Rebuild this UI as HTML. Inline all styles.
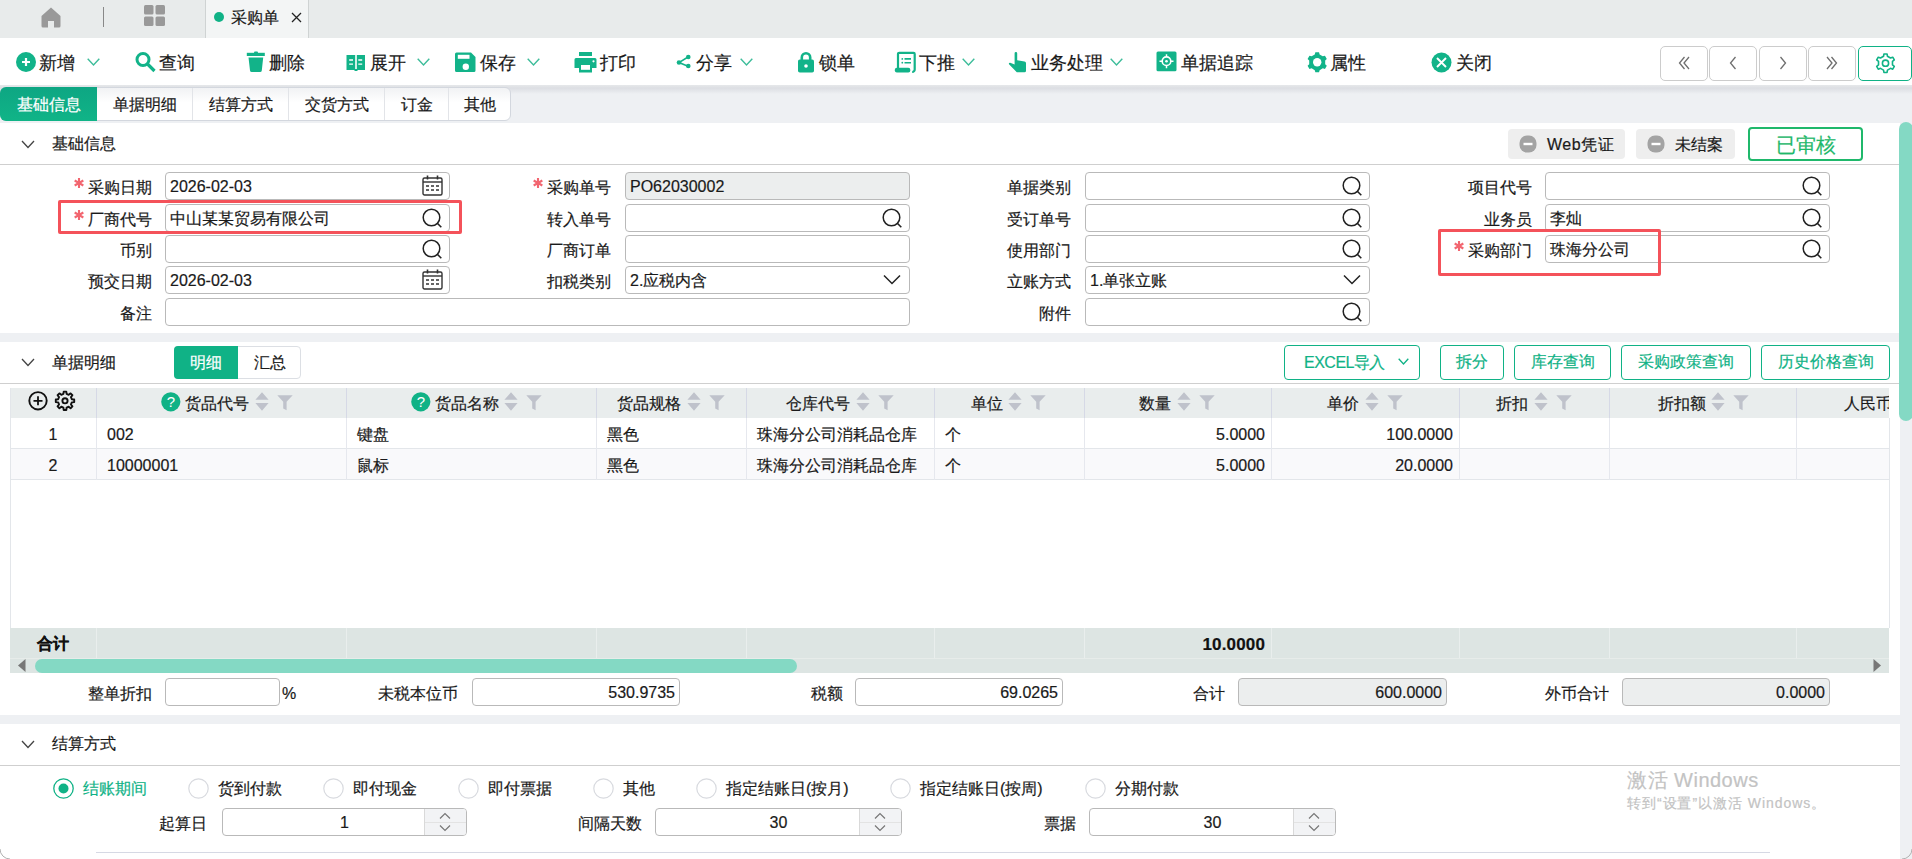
<!DOCTYPE html>
<html><head><meta charset="utf-8"><style>
html,body{margin:0;padding:0}
body{width:1912px;height:859px;overflow:hidden;position:relative;background:#eef0f3;font-family:"Liberation Sans",sans-serif}
.a{position:absolute}
.t{white-space:nowrap;-webkit-text-stroke:0.2px currentColor}
</style></head><body>
<div class="a" style="left:0px;top:0px;width:1912px;height:38px;background:#e8ebeb"></div>
<svg class="a" style="left:41px;top:7px" width="20" height="21" viewBox="0 0 20 21"><path d="M10 0.5 L19.5 9 V19 a1.5 1.5 0 0 1 -1.5 1.5 H13 V14 H7 V20.5 H2 a1.5 1.5 0 0 1 -1.5 -1.5 V9 Z" fill="#999"/></svg>
<div class="a" style="left:103px;top:7px;width:1px;height:20px;background:#888"></div>
<svg class="a" style="left:144px;top:5px" width="22" height="21" viewBox="0 0 22 21"><rect x="0" y="0" width="9.5" height="9.5" rx="1.5" fill="#999"/><rect x="11.5" y="0" width="9.5" height="9.5" rx="1.5" fill="#999"/><rect x="0" y="11.5" width="9.5" height="9.5" rx="1.5" fill="#999"/><rect x="11.5" y="11.5" width="9.5" height="9.5" rx="1.5" fill="#999"/></svg>
<div class="a" style="left:205px;top:0px;width:104px;height:38px;background:#f3f5f5;border-left:1px solid #cfd3d3;border-right:1px solid #cfd3d3;box-sizing:border-box"></div>
<svg class="a" style="left:214px;top:12px" width="10" height="10" viewBox="0 0 10 10"><circle cx="5" cy="5" r="5" fill="#10b286"/></svg>
<div class="a t" style="left:231px;top:8px;font-size:16px;line-height:20px;color:#1a1a1a;">采购单</div>
<svg class="a" style="left:291px;top:12px" width="11" height="11" viewBox="0 0 11 11"><path d="M1 1 L10 10 M10 1 L1 10" stroke="#222" stroke-width="1.3"/></svg>
<div class="a" style="left:0px;top:38px;width:1912px;height:47px;background:#fff"></div>
<div class="a" style="left:0px;top:85px;width:1912px;height:9px;background:linear-gradient(#e6e8ea,#dcdee3 35%,#eef0f3)"></div>
<svg class="a" style="left:16px;top:52px" width="20" height="20" viewBox="0 0 20 20"><circle cx="10" cy="10" r="10" fill="#12b389"/><path d="M6 10 H14 M10 6 V14" stroke="#fff" stroke-width="2.2"/></svg>
<div class="a t" style="left:39px;top:52px;font-size:18px;line-height:22px;color:#1a1a1a;">新增</div>
<svg class="a" style="left:87px;top:58px" width="13" height="9" viewBox="0 0 13 9"><path d="M0.7 0.8 L6.5 7 L12.3 0.8" fill="none" stroke="#3dbd9a" stroke-width="1.4"/></svg>
<svg class="a" style="left:135px;top:52px" width="22" height="21" viewBox="0 0 22 21"><circle cx="8" cy="7.5" r="6" fill="none" stroke="#12b389" stroke-width="3"/><path d="M12.5 12 L19.5 19" stroke="#12b389" stroke-width="3.2"/></svg>
<div class="a t" style="left:159px;top:52px;font-size:18px;line-height:22px;color:#1a1a1a;">查询</div>
<svg class="a" style="left:246px;top:51px" width="20" height="22" viewBox="0 0 20 22"><rect x="0.8" y="1.8" width="18" height="3.2" fill="#12b389"/><rect x="8" y="0.5" width="4" height="2" rx="1" fill="#12b389"/><path d="M2.5 6.5 H17.2 L15.8 19.5 a1.8 1.8 0 0 1 -1.8 1.6 H5.8 a1.8 1.8 0 0 1 -1.8 -1.6 Z" fill="#12b389"/></svg>
<div class="a t" style="left:269px;top:52px;font-size:18px;line-height:22px;color:#1a1a1a;">删除</div>
<svg class="a" style="left:346px;top:54px" width="20" height="18" viewBox="0 0 20 18"><path d="M0.5 1 H9.2 V16 H0.5 Z M10.8 1 H19 V16 H10.8 Z" fill="#12b389"/><path d="M8.5 15 H11.5 V17 H8.5 Z" fill="#12b389"/><path d="M3.2 6 H7 M3.2 10.2 H7 M12.3 6 H16.2 M12.3 10.2 H16.2" stroke="#fff" stroke-width="1.3"/></svg>
<div class="a t" style="left:370px;top:52px;font-size:18px;line-height:22px;color:#1a1a1a;">展开</div>
<svg class="a" style="left:417px;top:58px" width="13" height="9" viewBox="0 0 13 9"><path d="M0.7 0.8 L6.5 7 L12.3 0.8" fill="none" stroke="#3dbd9a" stroke-width="1.4"/></svg>
<svg class="a" style="left:455px;top:52px" width="22" height="21" viewBox="0 0 22 21"><path d="M1.5 0.5 H16 L20.5 5 V18.5 a1.5 1.5 0 0 1 -1.5 1.5 H1.5 a1.5 1.5 0 0 1 -1.5 -1.5 V2 a1.5 1.5 0 0 1 1.5 -1.5 Z" fill="#12b389"/><rect x="2.8" y="2.8" width="11.7" height="4" fill="#fff"/><circle cx="10.8" cy="14.8" r="3.2" fill="#fff"/></svg>
<div class="a t" style="left:480px;top:52px;font-size:18px;line-height:22px;color:#1a1a1a;">保存</div>
<svg class="a" style="left:527px;top:58px" width="13" height="9" viewBox="0 0 13 9"><path d="M0.7 0.8 L6.5 7 L12.3 0.8" fill="none" stroke="#3dbd9a" stroke-width="1.4"/></svg>
<svg class="a" style="left:574px;top:52px" width="24" height="21" viewBox="0 0 24 21"><rect x="5" y="0" width="13" height="4" fill="#12b389"/><path d="M2 6 H21 a1.5 1.5 0 0 1 1.5 1.5 V16 H0.5 V7.5 a1.5 1.5 0 0 1 1.5 -1.5 Z" fill="#12b389"/><rect x="5" y="12.5" width="13" height="8" fill="#12b389"/><rect x="7" y="13" width="9" height="4.8" fill="#fff"/><circle cx="19.5" cy="9.3" r="1.1" fill="#fff"/></svg>
<div class="a t" style="left:600px;top:52px;font-size:18px;line-height:22px;color:#1a1a1a;">打印</div>
<svg class="a" style="left:676px;top:54px" width="16" height="15" viewBox="0 0 16 15"><path d="M12 3 L3 8.5 L12 12.2" fill="none" stroke="#12b389" stroke-width="1.5"/><circle cx="12.3" cy="3" r="2.3" fill="#12b389"/><circle cx="3" cy="8.5" r="2.3" fill="#12b389"/><circle cx="12.3" cy="12" r="2.3" fill="#12b389"/></svg>
<div class="a t" style="left:696px;top:52px;font-size:18px;line-height:22px;color:#1a1a1a;">分享</div>
<svg class="a" style="left:740px;top:58px" width="13" height="9" viewBox="0 0 13 9"><path d="M0.7 0.8 L6.5 7 L12.3 0.8" fill="none" stroke="#3dbd9a" stroke-width="1.4"/></svg>
<svg class="a" style="left:798px;top:52px" width="16" height="21" viewBox="0 0 16 21"><path d="M3.8 8 V5.5 a4.2 4.2 0 0 1 8.4 0 V8" fill="none" stroke="#12b389" stroke-width="2.6"/><rect x="0" y="7.5" width="16" height="13" rx="1.8" fill="#12b389"/><circle cx="8" cy="14" r="1.8" fill="#fff"/></svg>
<div class="a t" style="left:819px;top:52px;font-size:18px;line-height:22px;color:#1a1a1a;">锁单</div>
<svg class="a" style="left:894px;top:51px" width="22" height="22" viewBox="0 0 22 22"><path d="M4 19 V3 a1.2 1.2 0 0 1 1.2 -1.2 H19.5 a1.2 1.2 0 0 1 1.2 1.2 V18.5 a2.5 2.5 0 0 1 -2.5 2.5" fill="none" stroke="#12b389" stroke-width="2.2"/><rect x="0.8" y="16.8" width="15.5" height="4.7" rx="2" fill="#12b389"/><circle cx="8.3" cy="7.9" r="0.9" fill="#12b389"/><circle cx="8.3" cy="11.7" r="0.9" fill="#12b389"/><path d="M10.5 7.9 H17 M10.5 11.7 H17" stroke="#12b389" stroke-width="1.6"/></svg>
<div class="a t" style="left:919px;top:52px;font-size:18px;line-height:22px;color:#1a1a1a;">下推</div>
<svg class="a" style="left:962px;top:58px" width="13" height="9" viewBox="0 0 13 9"><path d="M0.7 0.8 L6.5 7 L12.3 0.8" fill="none" stroke="#3dbd9a" stroke-width="1.4"/></svg>
<svg class="a" style="left:1008px;top:52px" width="19" height="21" viewBox="0 0 19 21"><path d="M6.6 1.3 a1.3 1.3 0 0 1 2.6 0 V8.2 L16.5 9.6 a1.8 1.8 0 0 1 1.5 1.8 V18.8 a1.5 1.5 0 0 1 -1.5 1.5 H8.8 L1 12.3 a1.2 1.2 0 0 1 1.2 -1.6 L6.6 12.6 Z" fill="#12b389"/></svg>
<div class="a t" style="left:1031px;top:52px;font-size:18px;line-height:22px;color:#1a1a1a;">业务处理</div>
<svg class="a" style="left:1110px;top:58px" width="13" height="9" viewBox="0 0 13 9"><path d="M0.7 0.8 L6.5 7 L12.3 0.8" fill="none" stroke="#3dbd9a" stroke-width="1.4"/></svg>
<svg class="a" style="left:1156px;top:51px" width="21" height="21" viewBox="0 0 21 21"><rect x="0.5" y="0.5" width="20" height="19.8" rx="1.5" fill="#12b389"/><circle cx="10.5" cy="10.2" r="4.3" fill="none" stroke="#fff" stroke-width="1.6"/><circle cx="10.5" cy="10.2" r="1.3" fill="#fff"/><path d="M10.5 3.2 V6 M10.5 14.4 V17.2 M3.5 10.2 H6.3 M14.7 10.2 H17.5" stroke="#fff" stroke-width="1.5"/></svg>
<div class="a t" style="left:1181px;top:52px;font-size:18px;line-height:22px;color:#1a1a1a;">单据追踪</div>
<svg class="a" style="left:1307px;top:52px" width="21" height="21" viewBox="0 0 21 21"><path d="M7.78 2.46 L8.35 0.27 L12.05 0.27 L12.62 2.46 L15.78 4.29 L17.96 3.69 L19.81 6.88 L18.19 8.47 L18.19 12.13 L19.81 13.72 L17.96 16.91 L15.78 16.31 L12.62 18.14 L12.05 20.33 L8.35 20.33 L7.78 18.14 L4.62 16.31 L2.44 16.91 L0.59 13.72 L2.21 12.13 L2.21 8.47 L0.59 6.88 L2.44 3.69 L4.62 4.29 Z" fill="#12b389"/><circle cx="10.2" cy="10.3" r="4.2" fill="#fff"/></svg>
<div class="a t" style="left:1330px;top:52px;font-size:18px;line-height:22px;color:#1a1a1a;">属性</div>
<svg class="a" style="left:1431px;top:52px" width="21" height="21" viewBox="0 0 21 21"><circle cx="10.5" cy="10.5" r="10" fill="#12b389"/><path d="M6 6 L15 15 M15 6 L6 15" stroke="#fff" stroke-width="1.9"/></svg>
<div class="a t" style="left:1456px;top:52px;font-size:18px;line-height:22px;color:#1a1a1a;">关闭</div>
<div class="a" style="left:1660px;top:46px;width:48px;height:35px;border:1px solid #cccccc;border-radius:5px;box-sizing:border-box;background:#fff"></div>
<div class="a" style="left:1709px;top:46px;width:48px;height:35px;border:1px solid #cccccc;border-radius:5px;box-sizing:border-box;background:#fff"></div>
<div class="a" style="left:1759px;top:46px;width:48px;height:35px;border:1px solid #cccccc;border-radius:5px;box-sizing:border-box;background:#fff"></div>
<div class="a" style="left:1808px;top:46px;width:48px;height:35px;border:1px solid #cccccc;border-radius:5px;box-sizing:border-box;background:#fff"></div>
<svg class="a" style="left:1678px;top:56px" width="12" height="14" viewBox="0 0 12 14"><path d="M6.5 1 L1.5 7 L6.5 13 M11 1 L6 7 L11 13" fill="none" stroke="#6e6e6e" stroke-width="1.3"/></svg>
<svg class="a" style="left:1728px;top:56px" width="10" height="14" viewBox="0 0 10 14"><path d="M7.5 1 L2.5 7 L7.5 13" fill="none" stroke="#6e6e6e" stroke-width="1.3"/></svg>
<svg class="a" style="left:1778px;top:56px" width="10" height="14" viewBox="0 0 10 14"><path d="M2.5 1 L7.5 7 L2.5 13" fill="none" stroke="#6e6e6e" stroke-width="1.3"/></svg>
<svg class="a" style="left:1826px;top:56px" width="12" height="14" viewBox="0 0 12 14"><path d="M1 1 L6 7 L1 13 M5.5 1 L10.5 7 L5.5 13" fill="none" stroke="#6e6e6e" stroke-width="1.3"/></svg>
<div class="a" style="left:1858px;top:46px;width:54px;height:35px;border:1.5px solid #10b286;border-radius:5px;box-sizing:border-box;background:#fff"></div>
<svg class="a" style="left:1875px;top:53px" width="21" height="21" viewBox="0 0 21 21"><path d="M8.54 3.27 L8.93 0.93 L12.07 0.93 L12.46 3.27 L15.52 5.04 L17.74 4.20 L19.31 6.93 L17.48 8.44 L17.48 11.96 L19.31 13.47 L17.74 16.20 L15.52 15.36 L12.46 17.13 L12.07 19.47 L8.93 19.47 L8.54 17.13 L5.48 15.36 L3.26 16.20 L1.69 13.47 L3.52 11.96 L3.52 8.44 L1.69 6.93 L3.26 4.20 L5.48 5.04 Z" fill="none" stroke="#10b286" stroke-width="1.6" stroke-linejoin="round"/><circle cx="10.5" cy="10.2" r="3.1" fill="none" stroke="#10b286" stroke-width="1.6"/></svg>
<div class="a" style="left:0;top:87px;width:511px;height:34px;border:1px solid #d3d7de;border-radius:6px;box-sizing:border-box;background:linear-gradient(#f1f2f4,#fff 45%);overflow:hidden"></div>
<div class="a" style="left:0px;top:87px;width:97px;height:34px;background:linear-gradient(#0ea683,#10b487);border-radius:6px 0 0 6px"></div>
<div class="a" style="left:192px;top:88px;width:1px;height:32px;background:#e2e4e8"></div>
<div class="a" style="left:288px;top:88px;width:1px;height:32px;background:#e2e4e8"></div>
<div class="a" style="left:384px;top:88px;width:1px;height:32px;background:#e2e4e8"></div>
<div class="a" style="left:448px;top:88px;width:1px;height:32px;background:#e2e4e8"></div>
<div class="a t" style="left:-1.5px;top:95px;width:100px;text-align:center;font-size:16px;line-height:20px;color:#fff;">基础信息</div>
<div class="a t" style="left:94.5px;top:95px;width:100px;text-align:center;font-size:16px;line-height:20px;color:#1a1a1a;">单据明细</div>
<div class="a t" style="left:190.5px;top:95px;width:100px;text-align:center;font-size:16px;line-height:20px;color:#1a1a1a;">结算方式</div>
<div class="a t" style="left:286.5px;top:95px;width:100px;text-align:center;font-size:16px;line-height:20px;color:#1a1a1a;">交货方式</div>
<div class="a t" style="left:366.5px;top:95px;width:100px;text-align:center;font-size:16px;line-height:20px;color:#1a1a1a;">订金</div>
<div class="a t" style="left:430.0px;top:95px;width:100px;text-align:center;font-size:16px;line-height:20px;color:#1a1a1a;">其他</div>
<div class="a" style="left:0px;top:123px;width:1900px;height:210px;background:#fff"></div>
<svg class="a" style="left:21px;top:140px" width="14" height="9" viewBox="0 0 14 9"><path d="M1 1 L7 7.5 L13 1" fill="none" stroke="#444" stroke-width="1.3"/></svg>
<div class="a t" style="left:52px;top:134px;font-size:16px;line-height:20px;color:#1a1a1a;">基础信息</div>
<div class="a" style="left:0px;top:164px;width:1900px;height:1px;background:#cfcfcf"></div>
<div class="a" style="left:1508px;top:129px;width:117px;height:30px;background:#eeeeee;border-radius:4px"></div>
<svg class="a" style="left:1519px;top:135px" width="18" height="18" viewBox="0 0 18 18"><rect x="0.5" y="0.5" width="17" height="17" rx="7.5" fill="#a3a3a3"/><rect x="4.5" y="7.8" width="9" height="2.4" fill="#fff"/></svg>
<div class="a t" style="left:1547px;top:135px;font-size:16px;line-height:20px;color:#1a1a1a;letter-spacing:0.5px">Web凭证</div>
<div class="a" style="left:1636px;top:129px;width:99px;height:30px;background:#eeeeee;border-radius:4px"></div>
<svg class="a" style="left:1647px;top:135px" width="18" height="18" viewBox="0 0 18 18"><rect x="0.5" y="0.5" width="17" height="17" rx="7.5" fill="#a3a3a3"/><rect x="4.5" y="7.8" width="9" height="2.4" fill="#fff"/></svg>
<div class="a t" style="left:1675px;top:135px;font-size:16px;line-height:20px;color:#1a1a1a;">未结案</div>
<div class="a" style="left:1748px;top:127px;width:115px;height:34px;border:2px solid #1fb86b;border-radius:4px;box-sizing:border-box"></div>
<div class="a t" style="left:1750.5px;top:133px;width:110px;text-align:center;font-size:20px;line-height:24px;color:#1fb86b;">已审核</div>
<div class="a t" style="left:-148px;top:178px;width:300px;text-align:right;font-size:16px;line-height:20px;color:#1a1a1a;">采购日期</div>
<svg class="a" style="left:73px;top:177px" width="12" height="12" viewBox="0 0 12 12"><path d="M6 1.0 V11.0 M1.67 3.5 L10.33 8.5 M1.67 8.5 L10.33 3.5" stroke="#f26670" stroke-width="2.1"/></svg>
<div class="a" style="left:165px;top:172px;width:285px;height:28px;border:1px solid #b9b9b9;border-radius:4px;box-sizing:border-box;background:#fff"></div>
<div class="a t" style="left:170px;top:177px;font-size:16px;line-height:20px;color:#1a1a1a;">2026-02-03</div>
<svg class="a" style="left:422px;top:175px" width="21" height="21" viewBox="0 0 21 21"><rect x="1" y="3" width="19" height="17" rx="1.5" fill="none" stroke="#333" stroke-width="1.4"/><path d="M1 7 H20" stroke="#333" stroke-width="1.4"/><path d="M5.5 0.5 V4.5 M15.5 0.5 V4.5" stroke="#333" stroke-width="1.6"/><path d="M4 11 H7 M9 11 H12 M14 11 H17 M4 15 H7 M9 15 H12 M14 15 H17" stroke="#333" stroke-width="1.3"/></svg>
<div class="a t" style="left:-148px;top:209.5px;width:300px;text-align:right;font-size:16px;line-height:20px;color:#1a1a1a;">厂商代号</div>
<svg class="a" style="left:73px;top:208.5px" width="12" height="12" viewBox="0 0 12 12"><path d="M6 1.0 V11.0 M1.67 3.5 L10.33 8.5 M1.67 8.5 L10.33 3.5" stroke="#f26670" stroke-width="2.1"/></svg>
<div class="a" style="left:165px;top:203.5px;width:285px;height:28px;border:1px solid #b9b9b9;border-radius:4px;box-sizing:border-box;background:#fff"></div>
<div class="a t" style="left:170px;top:208.5px;font-size:16px;line-height:20px;color:#1a1a1a;">中山某某贸易有限公司</div>
<svg class="a" style="left:422px;top:207.5px" width="22" height="21" viewBox="0 0 22 21"><circle cx="9.5" cy="9.5" r="8.3" fill="none" stroke="#222" stroke-width="1.5"/><path d="M15.3 15.3 L19.3 19.3" stroke="#222" stroke-width="1.6"/></svg>
<div class="a t" style="left:-148px;top:240.5px;width:300px;text-align:right;font-size:16px;line-height:20px;color:#1a1a1a;">币别</div>
<div class="a" style="left:165px;top:234.5px;width:285px;height:28px;border:1px solid #b9b9b9;border-radius:4px;box-sizing:border-box;background:#fff"></div>
<svg class="a" style="left:422px;top:238.5px" width="22" height="21" viewBox="0 0 22 21"><circle cx="9.5" cy="9.5" r="8.3" fill="none" stroke="#222" stroke-width="1.5"/><path d="M15.3 15.3 L19.3 19.3" stroke="#222" stroke-width="1.6"/></svg>
<div class="a t" style="left:-148px;top:272px;width:300px;text-align:right;font-size:16px;line-height:20px;color:#1a1a1a;">预交日期</div>
<div class="a" style="left:165px;top:266px;width:285px;height:28px;border:1px solid #b9b9b9;border-radius:4px;box-sizing:border-box;background:#fff"></div>
<div class="a t" style="left:170px;top:271px;font-size:16px;line-height:20px;color:#1a1a1a;">2026-02-03</div>
<svg class="a" style="left:422px;top:269px" width="21" height="21" viewBox="0 0 21 21"><rect x="1" y="3" width="19" height="17" rx="1.5" fill="none" stroke="#333" stroke-width="1.4"/><path d="M1 7 H20" stroke="#333" stroke-width="1.4"/><path d="M5.5 0.5 V4.5 M15.5 0.5 V4.5" stroke="#333" stroke-width="1.6"/><path d="M4 11 H7 M9 11 H12 M14 11 H17 M4 15 H7 M9 15 H12 M14 15 H17" stroke="#333" stroke-width="1.3"/></svg>
<div class="a t" style="left:-148px;top:303.5px;width:300px;text-align:right;font-size:16px;line-height:20px;color:#1a1a1a;">备注</div>
<div class="a" style="left:165px;top:297.5px;width:745px;height:28px;border:1px solid #b9b9b9;border-radius:4px;box-sizing:border-box;background:#fff"></div>
<div class="a t" style="left:311px;top:178px;width:300px;text-align:right;font-size:16px;line-height:20px;color:#1a1a1a;">采购单号</div>
<svg class="a" style="left:532px;top:177px" width="12" height="12" viewBox="0 0 12 12"><path d="M6 1.0 V11.0 M1.67 3.5 L10.33 8.5 M1.67 8.5 L10.33 3.5" stroke="#f26670" stroke-width="2.1"/></svg>
<div class="a" style="left:625px;top:172px;width:285px;height:28px;border:1px solid #b9b9b9;border-radius:4px;box-sizing:border-box;background:#eceeee"></div>
<div class="a t" style="left:630px;top:177px;font-size:16px;line-height:20px;color:#1a1a1a;">PO62030002</div>
<div class="a t" style="left:311px;top:209.5px;width:300px;text-align:right;font-size:16px;line-height:20px;color:#1a1a1a;">转入单号</div>
<div class="a" style="left:625px;top:203.5px;width:285px;height:28px;border:1px solid #b9b9b9;border-radius:4px;box-sizing:border-box;background:#fff"></div>
<svg class="a" style="left:882px;top:207.5px" width="22" height="21" viewBox="0 0 22 21"><circle cx="9.5" cy="9.5" r="8.3" fill="none" stroke="#222" stroke-width="1.5"/><path d="M15.3 15.3 L19.3 19.3" stroke="#222" stroke-width="1.6"/></svg>
<div class="a t" style="left:311px;top:240.5px;width:300px;text-align:right;font-size:16px;line-height:20px;color:#1a1a1a;">厂商订单</div>
<div class="a" style="left:625px;top:234.5px;width:285px;height:28px;border:1px solid #b9b9b9;border-radius:4px;box-sizing:border-box;background:#fff"></div>
<div class="a t" style="left:311px;top:272px;width:300px;text-align:right;font-size:16px;line-height:20px;color:#1a1a1a;">扣税类别</div>
<div class="a" style="left:625px;top:266px;width:285px;height:28px;border:1px solid #b9b9b9;border-radius:4px;box-sizing:border-box;background:#fff"></div>
<div class="a t" style="left:630px;top:271px;font-size:16px;line-height:20px;color:#1a1a1a;">2.应税内含</div>
<svg class="a" style="left:883px;top:274px" width="18" height="12" viewBox="0 0 18 12"><path d="M1 1.5 L9 9.5 L17 1.5" fill="none" stroke="#222" stroke-width="1.5"/></svg>
<div class="a t" style="left:771px;top:178px;width:300px;text-align:right;font-size:16px;line-height:20px;color:#1a1a1a;">单据类别</div>
<div class="a" style="left:1085px;top:172px;width:285px;height:28px;border:1px solid #b9b9b9;border-radius:4px;box-sizing:border-box;background:#fff"></div>
<svg class="a" style="left:1342px;top:176px" width="22" height="21" viewBox="0 0 22 21"><circle cx="9.5" cy="9.5" r="8.3" fill="none" stroke="#222" stroke-width="1.5"/><path d="M15.3 15.3 L19.3 19.3" stroke="#222" stroke-width="1.6"/></svg>
<div class="a t" style="left:771px;top:209.5px;width:300px;text-align:right;font-size:16px;line-height:20px;color:#1a1a1a;">受订单号</div>
<div class="a" style="left:1085px;top:203.5px;width:285px;height:28px;border:1px solid #b9b9b9;border-radius:4px;box-sizing:border-box;background:#fff"></div>
<svg class="a" style="left:1342px;top:207.5px" width="22" height="21" viewBox="0 0 22 21"><circle cx="9.5" cy="9.5" r="8.3" fill="none" stroke="#222" stroke-width="1.5"/><path d="M15.3 15.3 L19.3 19.3" stroke="#222" stroke-width="1.6"/></svg>
<div class="a t" style="left:771px;top:240.5px;width:300px;text-align:right;font-size:16px;line-height:20px;color:#1a1a1a;">使用部门</div>
<div class="a" style="left:1085px;top:234.5px;width:285px;height:28px;border:1px solid #b9b9b9;border-radius:4px;box-sizing:border-box;background:#fff"></div>
<svg class="a" style="left:1342px;top:238.5px" width="22" height="21" viewBox="0 0 22 21"><circle cx="9.5" cy="9.5" r="8.3" fill="none" stroke="#222" stroke-width="1.5"/><path d="M15.3 15.3 L19.3 19.3" stroke="#222" stroke-width="1.6"/></svg>
<div class="a t" style="left:771px;top:272px;width:300px;text-align:right;font-size:16px;line-height:20px;color:#1a1a1a;">立账方式</div>
<div class="a" style="left:1085px;top:266px;width:285px;height:28px;border:1px solid #b9b9b9;border-radius:4px;box-sizing:border-box;background:#fff"></div>
<div class="a t" style="left:1090px;top:271px;font-size:16px;line-height:20px;color:#1a1a1a;">1.单张立账</div>
<svg class="a" style="left:1343px;top:274px" width="18" height="12" viewBox="0 0 18 12"><path d="M1 1.5 L9 9.5 L17 1.5" fill="none" stroke="#222" stroke-width="1.5"/></svg>
<div class="a t" style="left:771px;top:303.5px;width:300px;text-align:right;font-size:16px;line-height:20px;color:#1a1a1a;">附件</div>
<div class="a" style="left:1085px;top:297.5px;width:285px;height:28px;border:1px solid #b9b9b9;border-radius:4px;box-sizing:border-box;background:#fff"></div>
<svg class="a" style="left:1342px;top:301.5px" width="22" height="21" viewBox="0 0 22 21"><circle cx="9.5" cy="9.5" r="8.3" fill="none" stroke="#222" stroke-width="1.5"/><path d="M15.3 15.3 L19.3 19.3" stroke="#222" stroke-width="1.6"/></svg>
<div class="a t" style="left:1232px;top:178px;width:300px;text-align:right;font-size:16px;line-height:20px;color:#1a1a1a;">项目代号</div>
<div class="a" style="left:1545px;top:172px;width:285px;height:28px;border:1px solid #b9b9b9;border-radius:4px;box-sizing:border-box;background:#fff"></div>
<svg class="a" style="left:1802px;top:176px" width="22" height="21" viewBox="0 0 22 21"><circle cx="9.5" cy="9.5" r="8.3" fill="none" stroke="#222" stroke-width="1.5"/><path d="M15.3 15.3 L19.3 19.3" stroke="#222" stroke-width="1.6"/></svg>
<div class="a t" style="left:1232px;top:209.5px;width:300px;text-align:right;font-size:16px;line-height:20px;color:#1a1a1a;">业务员</div>
<div class="a" style="left:1545px;top:203.5px;width:285px;height:28px;border:1px solid #b9b9b9;border-radius:4px;box-sizing:border-box;background:#fff"></div>
<div class="a t" style="left:1550px;top:208.5px;font-size:16px;line-height:20px;color:#1a1a1a;">李灿</div>
<svg class="a" style="left:1802px;top:207.5px" width="22" height="21" viewBox="0 0 22 21"><circle cx="9.5" cy="9.5" r="8.3" fill="none" stroke="#222" stroke-width="1.5"/><path d="M15.3 15.3 L19.3 19.3" stroke="#222" stroke-width="1.6"/></svg>
<div class="a t" style="left:1232px;top:240.5px;width:300px;text-align:right;font-size:16px;line-height:20px;color:#1a1a1a;">采购部门</div>
<svg class="a" style="left:1453px;top:239.5px" width="12" height="12" viewBox="0 0 12 12"><path d="M6 1.0 V11.0 M1.67 3.5 L10.33 8.5 M1.67 8.5 L10.33 3.5" stroke="#f26670" stroke-width="2.1"/></svg>
<div class="a" style="left:1545px;top:234.5px;width:285px;height:28px;border:1px solid #b9b9b9;border-radius:4px;box-sizing:border-box;background:#fff"></div>
<div class="a t" style="left:1550px;top:239.5px;font-size:16px;line-height:20px;color:#1a1a1a;">珠海分公司</div>
<svg class="a" style="left:1802px;top:238.5px" width="22" height="21" viewBox="0 0 22 21"><circle cx="9.5" cy="9.5" r="8.3" fill="none" stroke="#222" stroke-width="1.5"/><path d="M15.3 15.3 L19.3 19.3" stroke="#222" stroke-width="1.6"/></svg>
<div class="a" style="left:58px;top:200px;width:404px;height:34px;border:3px solid #f4525a;box-sizing:border-box;border-radius:2px"></div>
<div class="a" style="left:1438px;top:229px;width:223px;height:47px;border:3.5px solid #f4525a;box-sizing:border-box;border-radius:2px"></div>
<div class="a" style="left:0px;top:342px;width:1900px;height:373px;background:#fff"></div>
<svg class="a" style="left:21px;top:358px" width="14" height="9" viewBox="0 0 14 9"><path d="M1 1 L7 7.5 L13 1" fill="none" stroke="#444" stroke-width="1.3"/></svg>
<div class="a t" style="left:52px;top:353px;font-size:16px;line-height:20px;color:#1a1a1a;">单据明细</div>
<div class="a" style="left:174px;top:346px;width:127px;height:33px;border:1px solid #dcdfe4;border-radius:4px;box-sizing:border-box"></div>
<div class="a" style="left:174px;top:346px;width:64px;height:33px;background:#10b286;border-radius:4px 0 0 4px"></div>
<div class="a t" style="left:176.0px;top:353px;width:60px;text-align:center;font-size:16px;line-height:20px;color:#fff;">明细</div>
<div class="a t" style="left:239.5px;top:353px;width:60px;text-align:center;font-size:16px;line-height:20px;color:#1a1a1a;">汇总</div>
<div class="a" style="left:0px;top:383px;width:1900px;height:1px;background:#cfcfcf"></div>
<div class="a" style="left:1284px;top:345px;width:136px;height:35px;border:1px solid #10b286;border-radius:4px;box-sizing:border-box"></div>
<div class="a t" style="left:1304px;top:353px;font-size:16px;line-height:20px;color:#10b286;letter-spacing:-0.5px">EXCEL导入</div>
<svg class="a" style="left:1398px;top:358px" width="11" height="8" viewBox="0 0 11 8"><path d="M0.7 0.8 L5.5 6 L10.3 0.8" fill="none" stroke="#10b286" stroke-width="1.3"/></svg>
<div class="a" style="left:1440px;top:345px;width:64px;height:35px;border:1px solid #10b286;border-radius:4px;box-sizing:border-box"></div>
<div class="a t" style="left:1440.0px;top:352px;width:64px;text-align:center;font-size:16px;line-height:20px;color:#10b286;">拆分</div>
<div class="a" style="left:1514px;top:345px;width:97px;height:35px;border:1px solid #10b286;border-radius:4px;box-sizing:border-box"></div>
<div class="a t" style="left:1514.0px;top:352px;width:97px;text-align:center;font-size:16px;line-height:20px;color:#10b286;">库存查询</div>
<div class="a" style="left:1621px;top:345px;width:130px;height:35px;border:1px solid #10b286;border-radius:4px;box-sizing:border-box"></div>
<div class="a t" style="left:1621.0px;top:352px;width:130px;text-align:center;font-size:16px;line-height:20px;color:#10b286;">采购政策查询</div>
<div class="a" style="left:1761px;top:345px;width:129px;height:35px;border:1px solid #10b286;border-radius:4px;box-sizing:border-box"></div>
<div class="a t" style="left:1761.0px;top:352px;width:129px;text-align:center;font-size:16px;line-height:20px;color:#10b286;">历史价格查询</div>
<div class="a" style="left:10px;top:388px;width:1879px;height:30px;background:#e9eded"></div>
<div class="a" style="left:10px;top:418px;width:1879px;height:30px;background:#fff"></div>
<div class="a" style="left:10px;top:448px;width:1879px;height:31px;background:#f9f9fb"></div>
<div class="a" style="left:10px;top:448px;width:1879px;height:1px;background:#e3e6ea"></div>
<div class="a" style="left:10px;top:479px;width:1879px;height:1px;background:#e3e6ea"></div>
<div class="a" style="left:10px;top:388px;width:1px;height:240px;background:#e3e6ea"></div>
<div class="a" style="left:1889px;top:388px;width:1px;height:240px;background:#e3e6ea"></div>
<div class="a" style="left:96px;top:388px;width:1px;height:30px;background:#d6d9e6"></div>
<div class="a" style="left:96px;top:418px;width:1px;height:62px;background:#e6e8ee"></div>
<div class="a" style="left:346px;top:388px;width:1px;height:30px;background:#d6d9e6"></div>
<div class="a" style="left:346px;top:418px;width:1px;height:62px;background:#e6e8ee"></div>
<div class="a" style="left:596px;top:388px;width:1px;height:30px;background:#d6d9e6"></div>
<div class="a" style="left:596px;top:418px;width:1px;height:62px;background:#e6e8ee"></div>
<div class="a" style="left:746px;top:388px;width:1px;height:30px;background:#d6d9e6"></div>
<div class="a" style="left:746px;top:418px;width:1px;height:62px;background:#e6e8ee"></div>
<div class="a" style="left:934px;top:388px;width:1px;height:30px;background:#d6d9e6"></div>
<div class="a" style="left:934px;top:418px;width:1px;height:62px;background:#e6e8ee"></div>
<div class="a" style="left:1084px;top:388px;width:1px;height:30px;background:#d6d9e6"></div>
<div class="a" style="left:1084px;top:418px;width:1px;height:62px;background:#e6e8ee"></div>
<div class="a" style="left:1271px;top:388px;width:1px;height:30px;background:#d6d9e6"></div>
<div class="a" style="left:1271px;top:418px;width:1px;height:62px;background:#e6e8ee"></div>
<div class="a" style="left:1459px;top:388px;width:1px;height:30px;background:#d6d9e6"></div>
<div class="a" style="left:1459px;top:418px;width:1px;height:62px;background:#e6e8ee"></div>
<div class="a" style="left:1609px;top:388px;width:1px;height:30px;background:#d6d9e6"></div>
<div class="a" style="left:1609px;top:418px;width:1px;height:62px;background:#e6e8ee"></div>
<div class="a" style="left:1796px;top:388px;width:1px;height:30px;background:#d6d9e6"></div>
<div class="a" style="left:1796px;top:418px;width:1px;height:62px;background:#e6e8ee"></div>
<svg class="a" style="left:28px;top:391px" width="20" height="20" viewBox="0 0 20 20"><circle cx="10" cy="9.8" r="8.7" fill="none" stroke="#111" stroke-width="1.9"/><path d="M5.5 9.8 H14.5 M10 5.3 V14.3" stroke="#111" stroke-width="1.8"/></svg>
<svg class="a" style="left:54px;top:390px" width="22" height="22" viewBox="0 0 22 22"><path d="M9.40 3.98 L9.70 1.59 L12.30 1.59 L12.60 3.98 L14.69 4.85 L16.59 3.37 L18.43 5.21 L16.95 7.11 L17.82 9.20 L20.21 9.50 L20.21 12.10 L17.82 12.40 L16.95 14.49 L18.43 16.39 L16.59 18.23 L14.69 16.75 L12.60 17.62 L12.30 20.01 L9.70 20.01 L9.40 17.62 L7.31 16.75 L5.41 18.23 L3.57 16.39 L5.05 14.49 L4.18 12.40 L1.79 12.10 L1.79 9.50 L4.18 9.20 L5.05 7.11 L3.57 5.21 L5.41 3.37 L7.31 4.85 Z" fill="none" stroke="#111" stroke-width="1.9" stroke-linejoin="round"/><circle cx="11" cy="10.8" r="2.6" fill="none" stroke="#111" stroke-width="1.9"/></svg>
<svg class="a" style="left:160.6px;top:392px" width="20" height="20" viewBox="0 0 20 20"><circle cx="9.8" cy="9.8" r="9.6" fill="#10b286"/><text x="9.8" y="15.3" text-anchor="middle" font-family="Liberation Sans" font-size="15" fill="#fff">?</text></svg>
<div class="a t" style="left:184.9px;top:394px;font-size:16px;line-height:20px;color:#1a1a1a;">货品代号</div>
<svg class="a" style="left:254.8px;top:392.3px" width="14" height="19" viewBox="0 0 14 19"><path d="M7 0.3 L13.6 7.8 H0.4 Z M7 18.7 L13.6 11 H0.4 Z" fill="#bfc2cb"/></svg>
<svg class="a" style="left:276.8px;top:394.8px" width="16" height="16" viewBox="0 0 16 16"><path d="M0.3 0.3 H15.7 L9.6 6.8 V15.2 L6.2 13.6 V6.8 Z" fill="#bfc2cb"/></svg>
<svg class="a" style="left:410.7px;top:392px" width="20" height="20" viewBox="0 0 20 20"><circle cx="9.8" cy="9.8" r="9.6" fill="#10b286"/><text x="9.8" y="15.3" text-anchor="middle" font-family="Liberation Sans" font-size="15" fill="#fff">?</text></svg>
<div class="a t" style="left:434.5px;top:394px;font-size:16px;line-height:20px;color:#1a1a1a;">货品名称</div>
<svg class="a" style="left:504.4px;top:392.3px" width="14" height="19" viewBox="0 0 14 19"><path d="M7 0.3 L13.6 7.8 H0.4 Z M7 18.7 L13.6 11 H0.4 Z" fill="#bfc2cb"/></svg>
<svg class="a" style="left:526.4px;top:394.8px" width="16" height="16" viewBox="0 0 16 16"><path d="M0.3 0.3 H15.7 L9.6 6.8 V15.2 L6.2 13.6 V6.8 Z" fill="#bfc2cb"/></svg>
<div class="a t" style="left:617.3px;top:394px;font-size:16px;line-height:20px;color:#1a1a1a;">货品规格</div>
<svg class="a" style="left:687.1999999999999px;top:392.3px" width="14" height="19" viewBox="0 0 14 19"><path d="M7 0.3 L13.6 7.8 H0.4 Z M7 18.7 L13.6 11 H0.4 Z" fill="#bfc2cb"/></svg>
<svg class="a" style="left:709.1999999999999px;top:394.8px" width="16" height="16" viewBox="0 0 16 16"><path d="M0.3 0.3 H15.7 L9.6 6.8 V15.2 L6.2 13.6 V6.8 Z" fill="#bfc2cb"/></svg>
<div class="a t" style="left:786.4px;top:394px;font-size:16px;line-height:20px;color:#1a1a1a;">仓库代号</div>
<svg class="a" style="left:856.3px;top:392.3px" width="14" height="19" viewBox="0 0 14 19"><path d="M7 0.3 L13.6 7.8 H0.4 Z M7 18.7 L13.6 11 H0.4 Z" fill="#bfc2cb"/></svg>
<svg class="a" style="left:878.3px;top:394.8px" width="16" height="16" viewBox="0 0 16 16"><path d="M0.3 0.3 H15.7 L9.6 6.8 V15.2 L6.2 13.6 V6.8 Z" fill="#bfc2cb"/></svg>
<div class="a t" style="left:970.7px;top:394px;font-size:16px;line-height:20px;color:#1a1a1a;">单位</div>
<svg class="a" style="left:1008.4000000000001px;top:392.3px" width="14" height="19" viewBox="0 0 14 19"><path d="M7 0.3 L13.6 7.8 H0.4 Z M7 18.7 L13.6 11 H0.4 Z" fill="#bfc2cb"/></svg>
<svg class="a" style="left:1030.4px;top:394.8px" width="16" height="16" viewBox="0 0 16 16"><path d="M0.3 0.3 H15.7 L9.6 6.8 V15.2 L6.2 13.6 V6.8 Z" fill="#bfc2cb"/></svg>
<div class="a t" style="left:1139.2px;top:394px;font-size:16px;line-height:20px;color:#1a1a1a;">数量</div>
<svg class="a" style="left:1176.9px;top:392.3px" width="14" height="19" viewBox="0 0 14 19"><path d="M7 0.3 L13.6 7.8 H0.4 Z M7 18.7 L13.6 11 H0.4 Z" fill="#bfc2cb"/></svg>
<svg class="a" style="left:1198.9px;top:394.8px" width="16" height="16" viewBox="0 0 16 16"><path d="M0.3 0.3 H15.7 L9.6 6.8 V15.2 L6.2 13.6 V6.8 Z" fill="#bfc2cb"/></svg>
<div class="a t" style="left:1327px;top:394px;font-size:16px;line-height:20px;color:#1a1a1a;">单价</div>
<svg class="a" style="left:1364.7px;top:392.3px" width="14" height="19" viewBox="0 0 14 19"><path d="M7 0.3 L13.6 7.8 H0.4 Z M7 18.7 L13.6 11 H0.4 Z" fill="#bfc2cb"/></svg>
<svg class="a" style="left:1386.7px;top:394.8px" width="16" height="16" viewBox="0 0 16 16"><path d="M0.3 0.3 H15.7 L9.6 6.8 V15.2 L6.2 13.6 V6.8 Z" fill="#bfc2cb"/></svg>
<div class="a t" style="left:1496px;top:394px;font-size:16px;line-height:20px;color:#1a1a1a;">折扣</div>
<svg class="a" style="left:1533.7px;top:392.3px" width="14" height="19" viewBox="0 0 14 19"><path d="M7 0.3 L13.6 7.8 H0.4 Z M7 18.7 L13.6 11 H0.4 Z" fill="#bfc2cb"/></svg>
<svg class="a" style="left:1555.7px;top:394.8px" width="16" height="16" viewBox="0 0 16 16"><path d="M0.3 0.3 H15.7 L9.6 6.8 V15.2 L6.2 13.6 V6.8 Z" fill="#bfc2cb"/></svg>
<div class="a t" style="left:1657.5px;top:394px;font-size:16px;line-height:20px;color:#1a1a1a;">折扣额</div>
<svg class="a" style="left:1711.3px;top:392.3px" width="14" height="19" viewBox="0 0 14 19"><path d="M7 0.3 L13.6 7.8 H0.4 Z M7 18.7 L13.6 11 H0.4 Z" fill="#bfc2cb"/></svg>
<svg class="a" style="left:1733.3px;top:394.8px" width="16" height="16" viewBox="0 0 16 16"><path d="M0.3 0.3 H15.7 L9.6 6.8 V15.2 L6.2 13.6 V6.8 Z" fill="#bfc2cb"/></svg>
<div class="a t" style="left:1844px;top:394px;font-size:16px;line-height:20px;color:#1a1a1a;">人民币</div>
<div class="a" style="left:1889px;top:388px;width:11px;height:30px;background:#fff"></div>
<div class="a t" style="left:13.0px;top:425px;width:80px;text-align:center;font-size:16px;line-height:20px;color:#1a1a1a;">1</div>
<div class="a t" style="left:107px;top:425px;font-size:16px;line-height:20px;color:#1a1a1a;">002</div>
<div class="a t" style="left:357px;top:425px;font-size:16px;line-height:20px;color:#1a1a1a;">键盘</div>
<div class="a t" style="left:607px;top:425px;font-size:16px;line-height:20px;color:#1a1a1a;">黑色</div>
<div class="a t" style="left:757px;top:425px;font-size:16px;line-height:20px;color:#1a1a1a;">珠海分公司消耗品仓库</div>
<div class="a t" style="left:945px;top:425px;font-size:16px;line-height:20px;color:#1a1a1a;">个</div>
<div class="a t" style="left:965px;top:425px;width:300px;text-align:right;font-size:16px;line-height:20px;color:#1a1a1a;">5.0000</div>
<div class="a t" style="left:1153px;top:425px;width:300px;text-align:right;font-size:16px;line-height:20px;color:#1a1a1a;">100.0000</div>
<div class="a t" style="left:13.0px;top:456px;width:80px;text-align:center;font-size:16px;line-height:20px;color:#1a1a1a;">2</div>
<div class="a t" style="left:107px;top:456px;font-size:16px;line-height:20px;color:#1a1a1a;">10000001</div>
<div class="a t" style="left:357px;top:456px;font-size:16px;line-height:20px;color:#1a1a1a;">鼠标</div>
<div class="a t" style="left:607px;top:456px;font-size:16px;line-height:20px;color:#1a1a1a;">黑色</div>
<div class="a t" style="left:757px;top:456px;font-size:16px;line-height:20px;color:#1a1a1a;">珠海分公司消耗品仓库</div>
<div class="a t" style="left:945px;top:456px;font-size:16px;line-height:20px;color:#1a1a1a;">个</div>
<div class="a t" style="left:965px;top:456px;width:300px;text-align:right;font-size:16px;line-height:20px;color:#1a1a1a;">5.0000</div>
<div class="a t" style="left:1153px;top:456px;width:300px;text-align:right;font-size:16px;line-height:20px;color:#1a1a1a;">20.0000</div>
<div class="a" style="left:10px;top:628px;width:1879px;height:45px;background:#dde5e3"></div>
<div class="a" style="left:96px;top:628px;width:1px;height:30px;background:#e9eeed"></div>
<div class="a" style="left:346px;top:628px;width:1px;height:30px;background:#e9eeed"></div>
<div class="a" style="left:596px;top:628px;width:1px;height:30px;background:#e9eeed"></div>
<div class="a" style="left:746px;top:628px;width:1px;height:30px;background:#e9eeed"></div>
<div class="a" style="left:934px;top:628px;width:1px;height:30px;background:#e9eeed"></div>
<div class="a" style="left:1084px;top:628px;width:1px;height:30px;background:#e9eeed"></div>
<div class="a" style="left:1271px;top:628px;width:1px;height:30px;background:#e9eeed"></div>
<div class="a" style="left:1459px;top:628px;width:1px;height:30px;background:#e9eeed"></div>
<div class="a" style="left:1609px;top:628px;width:1px;height:30px;background:#e9eeed"></div>
<div class="a" style="left:1796px;top:628px;width:1px;height:30px;background:#e9eeed"></div>
<div class="a" style="left:10px;top:658px;width:1879px;height:1px;background:#e7ecea"></div>
<div class="a t" style="left:37px;top:634px;font-size:16px;line-height:20px;color:#111;font-weight:bold">合计</div>
<div class="a t" style="left:965px;top:634px;width:300px;text-align:right;font-size:17px;line-height:21px;color:#111;font-weight:bold;letter-spacing:0.15px">10.0000</div>
<svg class="a" style="left:17px;top:658px" width="10" height="15" viewBox="0 0 10 15"><path d="M8.5 1 V14 L1 7.5 Z" fill="#777"/></svg>
<div class="a" style="left:35px;top:659px;width:762px;height:14px;background:#84d9c4;border-radius:7px"></div>
<svg class="a" style="left:1872px;top:658px" width="10" height="15" viewBox="0 0 10 15"><path d="M1.5 1 V14 L9 7.5 Z" fill="#777"/></svg>
<div class="a t" style="left:-148px;top:684px;width:300px;text-align:right;font-size:16px;line-height:20px;color:#1a1a1a;">整单折扣</div>
<div class="a" style="left:165px;top:678px;width:115px;height:28px;border:1px solid #b9b9b9;border-radius:4px;box-sizing:border-box;background:#fff"></div>
<div class="a t" style="left:282px;top:684px;font-size:16px;line-height:20px;color:#1a1a1a;">%</div>
<div class="a t" style="left:158px;top:684px;width:300px;text-align:right;font-size:16px;line-height:20px;color:#1a1a1a;">未税本位币</div>
<div class="a" style="left:472px;top:678px;width:208px;height:28px;border:1px solid #b9b9b9;border-radius:4px;box-sizing:border-box;background:#fff"></div>
<div class="a t" style="left:375px;top:683px;width:300px;text-align:right;font-size:16px;line-height:20px;color:#1a1a1a;">530.9735</div>
<div class="a t" style="left:543px;top:684px;width:300px;text-align:right;font-size:16px;line-height:20px;color:#1a1a1a;">税额</div>
<div class="a" style="left:855px;top:678px;width:208px;height:28px;border:1px solid #b9b9b9;border-radius:4px;box-sizing:border-box;background:#fff"></div>
<div class="a t" style="left:758px;top:683px;width:300px;text-align:right;font-size:16px;line-height:20px;color:#1a1a1a;">69.0265</div>
<div class="a t" style="left:925px;top:684px;width:300px;text-align:right;font-size:16px;line-height:20px;color:#1a1a1a;">合计</div>
<div class="a" style="left:1238px;top:678px;width:209px;height:28px;border:1px solid #b9b9b9;border-radius:4px;box-sizing:border-box;background:#eceeee"></div>
<div class="a t" style="left:1142px;top:683px;width:300px;text-align:right;font-size:16px;line-height:20px;color:#1a1a1a;">600.0000</div>
<div class="a t" style="left:1309px;top:684px;width:300px;text-align:right;font-size:16px;line-height:20px;color:#1a1a1a;">外币合计</div>
<div class="a" style="left:1622px;top:678px;width:208px;height:28px;border:1px solid #b9b9b9;border-radius:4px;box-sizing:border-box;background:#eceeee"></div>
<div class="a t" style="left:1525px;top:683px;width:300px;text-align:right;font-size:16px;line-height:20px;color:#1a1a1a;">0.0000</div>
<div class="a" style="left:0px;top:724px;width:1900px;height:140px;background:#fff"></div>
<svg class="a" style="left:21px;top:740px" width="14" height="9" viewBox="0 0 14 9"><path d="M1 1 L7 7.5 L13 1" fill="none" stroke="#444" stroke-width="1.3"/></svg>
<div class="a t" style="left:52px;top:734px;font-size:16px;line-height:20px;color:#1a1a1a;">结算方式</div>
<div class="a" style="left:0px;top:765px;width:1900px;height:1px;background:#cfcfcf"></div>
<svg class="a" style="left:53px;top:778px" width="21" height="21" viewBox="0 0 21 21"><circle cx="10.5" cy="10.5" r="9.7" fill="#fff" stroke="#10b286" stroke-width="1.3"/><circle cx="10.5" cy="10.5" r="5" fill="#10b286"/></svg>
<div class="a t" style="left:83px;top:779px;font-size:16px;line-height:20px;color:#10b286;">结账期间</div>
<svg class="a" style="left:188px;top:778px" width="21" height="21" viewBox="0 0 21 21"><circle cx="10.5" cy="10.5" r="9.7" fill="#fff" stroke="#d8dadf" stroke-width="1.2"/></svg>
<div class="a t" style="left:218px;top:779px;font-size:16px;line-height:20px;color:#1a1a1a;">货到付款</div>
<svg class="a" style="left:323px;top:778px" width="21" height="21" viewBox="0 0 21 21"><circle cx="10.5" cy="10.5" r="9.7" fill="#fff" stroke="#d8dadf" stroke-width="1.2"/></svg>
<div class="a t" style="left:353px;top:779px;font-size:16px;line-height:20px;color:#1a1a1a;">即付现金</div>
<svg class="a" style="left:458px;top:778px" width="21" height="21" viewBox="0 0 21 21"><circle cx="10.5" cy="10.5" r="9.7" fill="#fff" stroke="#d8dadf" stroke-width="1.2"/></svg>
<div class="a t" style="left:488px;top:779px;font-size:16px;line-height:20px;color:#1a1a1a;">即付票据</div>
<svg class="a" style="left:593px;top:778px" width="21" height="21" viewBox="0 0 21 21"><circle cx="10.5" cy="10.5" r="9.7" fill="#fff" stroke="#d8dadf" stroke-width="1.2"/></svg>
<div class="a t" style="left:623px;top:779px;font-size:16px;line-height:20px;color:#1a1a1a;">其他</div>
<svg class="a" style="left:696px;top:778px" width="21" height="21" viewBox="0 0 21 21"><circle cx="10.5" cy="10.5" r="9.7" fill="#fff" stroke="#d8dadf" stroke-width="1.2"/></svg>
<div class="a t" style="left:726px;top:779px;font-size:16px;line-height:20px;color:#1a1a1a;">指定结账日(按月)</div>
<svg class="a" style="left:890px;top:778px" width="21" height="21" viewBox="0 0 21 21"><circle cx="10.5" cy="10.5" r="9.7" fill="#fff" stroke="#d8dadf" stroke-width="1.2"/></svg>
<div class="a t" style="left:920px;top:779px;font-size:16px;line-height:20px;color:#1a1a1a;">指定结账日(按周)</div>
<svg class="a" style="left:1085px;top:778px" width="21" height="21" viewBox="0 0 21 21"><circle cx="10.5" cy="10.5" r="9.7" fill="#fff" stroke="#d8dadf" stroke-width="1.2"/></svg>
<div class="a t" style="left:1115px;top:779px;font-size:16px;line-height:20px;color:#1a1a1a;">分期付款</div>
<div class="a t" style="left:-93px;top:814px;width:300px;text-align:right;font-size:16px;line-height:20px;color:#1a1a1a;">起算日</div>
<div class="a" style="left:222px;top:808px;width:245px;height:28px;border:1px solid #b9b9b9;border-radius:4px;box-sizing:border-box;background:#fff"></div>
<div class="a" style="left:424px;top:809px;width:42px;height:26px;background:#f2f3f5;border-left:1px solid #d9d9d9;border-radius:0 3px 3px 0;box-sizing:border-box"></div>
<div class="a" style="left:425px;top:821.5px;width:41px;height:1px;background:#e3e3e3"></div>
<svg class="a" style="left:439px;top:812px" width="12" height="8" viewBox="0 0 12 8"><path d="M1 6.5 L6 1.5 L11 6.5" fill="none" stroke="#777" stroke-width="1.2"/></svg>
<svg class="a" style="left:439px;top:824px" width="12" height="8" viewBox="0 0 12 8"><path d="M1 1.5 L6 6.5 L11 1.5" fill="none" stroke="#777" stroke-width="1.2"/></svg>
<div class="a t" style="left:294.5px;top:813px;width:100px;text-align:center;font-size:16px;line-height:20px;color:#1a1a1a;">1</div>
<div class="a t" style="left:342px;top:814px;width:300px;text-align:right;font-size:16px;line-height:20px;color:#1a1a1a;">间隔天数</div>
<div class="a" style="left:655px;top:808px;width:247px;height:28px;border:1px solid #b9b9b9;border-radius:4px;box-sizing:border-box;background:#fff"></div>
<div class="a" style="left:859px;top:809px;width:42px;height:26px;background:#f2f3f5;border-left:1px solid #d9d9d9;border-radius:0 3px 3px 0;box-sizing:border-box"></div>
<div class="a" style="left:860px;top:821.5px;width:41px;height:1px;background:#e3e3e3"></div>
<svg class="a" style="left:874px;top:812px" width="12" height="8" viewBox="0 0 12 8"><path d="M1 6.5 L6 1.5 L11 6.5" fill="none" stroke="#777" stroke-width="1.2"/></svg>
<svg class="a" style="left:874px;top:824px" width="12" height="8" viewBox="0 0 12 8"><path d="M1 1.5 L6 6.5 L11 1.5" fill="none" stroke="#777" stroke-width="1.2"/></svg>
<div class="a t" style="left:728.5px;top:813px;width:100px;text-align:center;font-size:16px;line-height:20px;color:#1a1a1a;">30</div>
<div class="a t" style="left:776px;top:814px;width:300px;text-align:right;font-size:16px;line-height:20px;color:#1a1a1a;">票据</div>
<div class="a" style="left:1089px;top:808px;width:247px;height:28px;border:1px solid #b9b9b9;border-radius:4px;box-sizing:border-box;background:#fff"></div>
<div class="a" style="left:1293px;top:809px;width:42px;height:26px;background:#f2f3f5;border-left:1px solid #d9d9d9;border-radius:0 3px 3px 0;box-sizing:border-box"></div>
<div class="a" style="left:1294px;top:821.5px;width:41px;height:1px;background:#e3e3e3"></div>
<svg class="a" style="left:1308px;top:812px" width="12" height="8" viewBox="0 0 12 8"><path d="M1 6.5 L6 1.5 L11 6.5" fill="none" stroke="#777" stroke-width="1.2"/></svg>
<svg class="a" style="left:1308px;top:824px" width="12" height="8" viewBox="0 0 12 8"><path d="M1 1.5 L6 6.5 L11 1.5" fill="none" stroke="#777" stroke-width="1.2"/></svg>
<div class="a t" style="left:1162.5px;top:813px;width:100px;text-align:center;font-size:16px;line-height:20px;color:#1a1a1a;">30</div>
<div class="a" style="left:96px;top:852px;width:1674px;height:1px;background:#d6d9e4"></div>
<div class="a t" style="left:1627px;top:767px;font-size:20px;line-height:26px;color:#c3c3c3;letter-spacing:0.5px">激活 Windows</div>
<div class="a t" style="left:1627px;top:794px;font-size:14px;line-height:18px;color:#c3c3c3;letter-spacing:0.95px">转到“设置”以激活 Windows。</div>
<div class="a" style="left:1900px;top:123px;width:12px;height:736px;background:#eef0f3"></div>
<div class="a" style="left:1899px;top:122px;width:14px;height:299px;background:#84d9c4;border-radius:7px"></div>
<svg class="a" style="left:0px;top:849px" width="10" height="10" viewBox="0 0 10 10"><path d="M0 0 A10 10 0 0 0 10 10" fill="none" stroke="#b0b0b0" stroke-width="1"/></svg>
<svg class="a" style="left:1902px;top:849px" width="10" height="10" viewBox="0 0 10 10"><path d="M10 0 A10 10 0 0 1 0 10" fill="none" stroke="#b0b0b0" stroke-width="1"/></svg>
</body></html>
